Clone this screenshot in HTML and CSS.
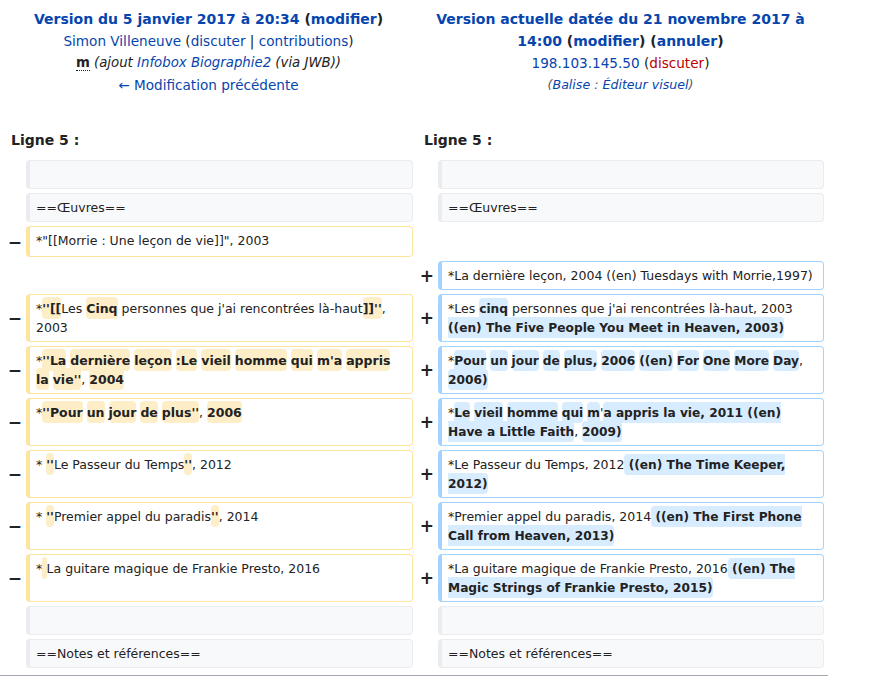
FILE: index.html
```html
<!DOCTYPE html>
<html lang="fr">
<head>
<meta charset="utf-8">
<title>Différence entre les versions</title>
<link rel="stylesheet" href="styles.css">
</head>
<body>
<div class="diffpage">
  <div class="titles">
    <div class="title">
      <div class="t-main"><a class="lnk" href="#">Version du 5 janvier 2017 à 20:34</a> (<a class="lnk" href="#">modifier</a>)</div>
      <div><a class="lnk" href="#">Simon Villeneuve</a> (<a class="lnk" href="#">discuter</a> | <a class="lnk" href="#">contributions</a>)</div>
      <div class="summary"><abbr class="minor">m</abbr> <span class="comment">(ajout <a class="lnk" href="#">Infobox Biographie2</a> (via JWB))</span></div>
      <div><a class="lnk" href="#">← Modification précédente</a></div>
    </div>
    <div class="title">
      <div class="t-main"><a class="lnk" href="#">Version actuelle datée du 21 novembre 2017 à 14:00</a> (<a class="lnk" href="#">modifier</a>) (<a class="lnk" href="#">annuler</a>)</div>
      <div><a class="lnk" href="#">198.103.145.50</a> (<a class="red" href="#">discuter</a>)</div>
      <div class="tags">(<a class="lnk" href="#">Balise</a> : <a class="lnk" href="#">Éditeur visuel</a>)</div>
    </div>
  </div>

  <div class="linenos">
    <div class="lineno">Ligne 5 :</div>
    <div class="lineno">Ligne 5 :</div>
  </div>

  <div class="diff">
    <div class="marker"></div>
    <div class="box ctx"></div>
    <div class="marker"></div>
    <div class="box ctx"></div>

    <div class="marker"></div>
    <div class="box ctx">==Œuvres==</div>
    <div class="marker"></div>
    <div class="box ctx">==Œuvres==</div>

    <div class="marker">−</div>
    <div class="box del">*"[[Morrie : Une leçon de vie]]", 2003</div>
    <div class="empty tall"></div>

    <div class="empty"></div>
    <div class="marker">+</div>
    <div class="box ins">*La dernière leçon, 2004 ((en) Tuesdays with Morrie,1997)</div>

    <div class="marker">−</div>
    <div class="box del">*<del class="hd">''[[</del>Les <del class="hd">Cinq</del> personnes que j'ai rencontrées là-haut<del class="hd">]]''</del>, 2003</div>
    <div class="marker">+</div>
    <div class="box ins">*Les <ins class="hi">cinq</ins> personnes que j'ai rencontrées là-haut, 2003<ins class="hi"> ((en) The Five People You Meet in Heaven, 2003)</ins></div>

    <div class="marker">−</div>
    <div class="box del">*<del class="hd">''La</del> <del class="hd">dernière</del> <del class="hd">leçon</del> <del class="hd">:Le</del> <del class="hd">vieil</del> <del class="hd">homme</del> <del class="hd">qui</del> <del class="hd">m'a</del> <del class="hd">appris</del> <del class="hd">la</del> <del class="hd">vie''</del>, <del class="hd">2004</del></div>
    <div class="marker">+</div>
    <div class="box ins">*<ins class="hi">Pour</ins> <ins class="hi">un</ins> <ins class="hi">jour</ins> <ins class="hi">de</ins> <ins class="hi">plus,</ins> <ins class="hi">2006</ins> <ins class="hi">((en)</ins> <ins class="hi">For</ins> <ins class="hi">One</ins> <ins class="hi">More</ins> <ins class="hi">Day</ins>, <ins class="hi">2006)</ins></div>

    <div class="marker">−</div>
    <div class="box del">*<del class="hd">''Pour</del> <del class="hd">un</del> <del class="hd">jour</del> <del class="hd">de</del> <del class="hd">plus''</del>, <del class="hd">2006</del></div>
    <div class="marker">+</div>
    <div class="box ins">*<ins class="hi">Le</ins> <ins class="hi">vieil</ins> <ins class="hi">homme</ins> <ins class="hi">qui</ins> <ins class="hi">m</ins>'<ins class="hi">a appris la vie, 2011 ((en) Have a Little Faith</ins>, <ins class="hi">2009)</ins></div>

    <div class="marker">−</div>
    <div class="box del">* <del class="hd">''</del>Le Passeur du Temps<del class="hd">''</del>, 2012</div>
    <div class="marker">+</div>
    <div class="box ins">*Le Passeur du Temps, 2012<ins class="hi"> ((en) The Time Keeper, 2012)</ins></div>

    <div class="marker">−</div>
    <div class="box del">* <del class="hd">''</del>Premier appel du paradis<del class="hd">''</del>, 2014</div>
    <div class="marker">+</div>
    <div class="box ins">*Premier appel du paradis, 2014<ins class="hi"> ((en) The First Phone Call from Heaven, 2013)</ins></div>

    <div class="marker">−</div>
    <div class="box del">*<del class="hd"> </del>La guitare magique de Frankie Presto, 2016</div>
    <div class="marker">+</div>
    <div class="box ins">*La guitare magique de Frankie Presto, 2016<ins class="hi"> ((en) The Magic Strings of Frankie Presto, 2015)</ins></div>

    <div class="marker"></div>
    <div class="box ctx"></div>
    <div class="marker"></div>
    <div class="box ctx"></div>

    <div class="marker"></div>
    <div class="box ctx">==Notes et références==</div>
    <div class="marker"></div>
    <div class="box ctx">==Notes et références==</div>
  </div>
</div>
</body>
</html>
```

FILE: styles.css
```css
html, body {
  margin: 0;
  padding: 0;
  background: #ffffff;
}

body {
  font-family: "DejaVu Sans", "Liberation Sans", sans-serif;
  color: #222222;
  font-size: 13px;
}

.diffpage {
  width: 828px;
  border-bottom: 1px solid #a2a9b1;
  padding-bottom: 7px;
}

.titles {
  display: grid;
  grid-template-columns: 409px 407px;
  column-gap: 4px;
  padding: 8px 4px 0 4px;
}

.title {
  text-align: center;
  line-height: 22px;
  font-size: 13.6px;
}

.t-main {
  font-weight: bold;
  font-size: 14px;
}

.summary {
  font-size: 13.3px;
}

.lnk {
  color: #0645ad;
  text-decoration: none;
}

.red {
  color: #ba0000;
  text-decoration: none;
}

.minor {
  font-weight: bold;
  text-decoration: none;
  border-bottom: 1px dotted #222222;
  cursor: help;
}

.comment {
  font-style: italic;
}

.tags {
  font-style: italic;
  color: #54595d;
  font-size: 12.6px;
}

.linenos {
  display: grid;
  grid-template-columns: 409px 407px;
  column-gap: 4px;
  padding: 33px 4px 0 4px;
}

.lineno {
  font-weight: bold;
  line-height: 22px;
  padding-left: 7px;
  font-size: 14px;
}

.diff {
  display: grid;
  grid-template-columns: 18px 387px 17px 386px;
  column-gap: 4px;
  row-gap: 4px;
  padding: 9px 4px 0 4px;
  font-size: 12.5px;
}

.marker {
  display: flex;
  align-items: center;
  justify-content: flex-end;
  font-weight: bold;
  font-size: 17px;
  color: #222222;
}

.empty {
  grid-column: span 2;
}

.empty.tall {
  min-height: 31px;
}

.box {
  line-height: 19px;
  min-height: 19px;
  padding: 4px 6px;
  border-style: solid;
  border-width: 1px 1px 1px 4px;
  border-radius: 4px;
  color: #222222;
  overflow-wrap: break-word;
}

.ctx {
  background: #f8f9fa;
  border-color: #eaecf0;
}

.del {
  background: #ffffff;
  border-color: #ffe49c;
}

.ins {
  background: #ffffff;
  border-color: #a3d3ff;
}

.hd,
.hi {
  font-weight: bold;
  text-decoration: none;
  border-radius: 4px;
  padding: 4px 0 3px 0;
  line-height: 1;
}

.hd {
  background: #feeec8;
}

.hi {
  background: #d8ecff;
  font-size: 12.2px;
}
```
